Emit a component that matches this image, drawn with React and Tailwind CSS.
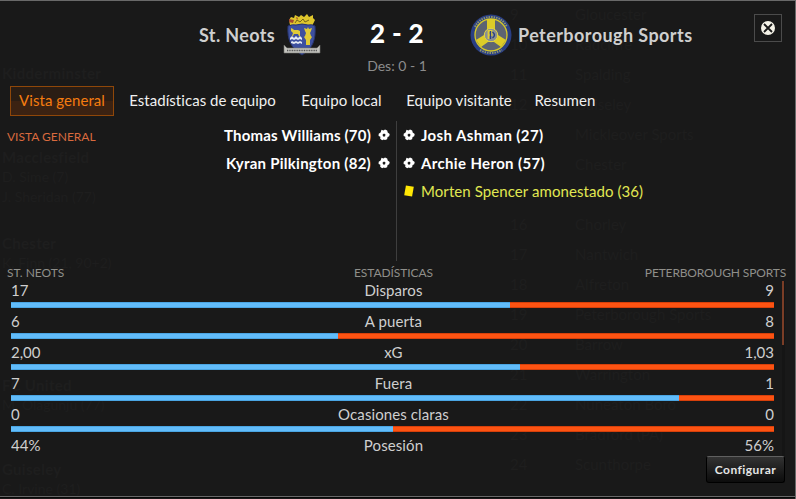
const tabs = [
  { label: 'Vista general', className: 'w-[104px] border border-[#8f4709] bg-linear-to-b from-[#2a1d14] from-50% to-[#3b2212] to-50% text-[#f57c10] tracking-[0.05px]' },
  { label: 'Estadísticas de equipo', className: 'ml-[14px] w-[149px] text-[#f0f0f0] tracking-[0.05px]' },
  { label: 'Equipo local', className: 'ml-[23px] w-[83px] text-[#f0f0f0] tracking-[0.05px]' },
  { label: 'Equipo visitante', className: 'ml-[22px] w-[108px] text-[#f0f0f0] tracking-[0.05px]' },
  { label: 'Resumen', className: 'ml-[19px] w-[66px] text-[#f0f0f0] tracking-[0.12px]' },
];

const stats = [
  { label: 'Disparos', home: '17', away: '9', split: 499 },
  { label: 'A puerta', home: '6', away: '8', split: 327 },
  { label: 'xG', home: '2,00', away: '1,03', split: 509 },
  { label: 'Fuera', home: '7', away: '1', split: 668 },
  { label: 'Ocasiones claras', home: '0', away: '0', split: 382 },
  { label: 'Posesión', home: '44%', away: '56%' },
];

// league table and results list showing faintly through the dialog
const league = [
  ['9', 'Gloucester'], ['10', 'Radcliffe'], ['11', 'Spalding'], ['12', 'Guiseley'],
  ['', 'Mickleover Sports'], ['', 'Chester'], ['', ''], ['16', 'Chorley'],
  ['17', 'Nantwich'], ['18', 'Alfreton'], ['19', 'Peterborough Sports'], ['20', 'Barrow'],
  ['21', 'Warrington'], ['22', 'Nuneaton Boro'], ['23', 'Bradford (PA)'], ['24', 'Scunthorpe'],
];

const results = [
  { team: 'Kidderminster', height: 'h-[84px]', scorers: [] },
  { team: 'Macclesfield', height: 'h-[86px]', scorers: ['D. Sime (7)', 'J. Sheridan (77)'] },
  { team: 'Chester', height: 'h-[142px]', scorers: ['K. Finn (21, 90+2)'] },
  { team: 'FC United', height: 'h-[84px]', scorers: ['M. Olagunju (77)'] },
  { team: 'Guiseley', height: 'h-[50px]', scorers: ['C. Irvine (31)'] },
];

function Backdrop() {
  return (
    <div aria-hidden="true" className="pointer-events-none absolute inset-0 -z-10 flex justify-between overflow-hidden text-[#1e1e1e]">
      <div className="w-[200px] pt-[62px] pl-[2px]">
        {results.map((r) => (
          <div key={r.team} className={r.height}>
            <div className="text-[15px] leading-[20px] font-bold tracking-[0.3px]">{r.team}</div>
            {r.scorers.map((s) => <div key={s} className="text-[14px] leading-[20px]">{s}</div>)}
          </div>
        ))}
      </div>
      <div className="-mt-[2px] w-[285px]">
        {league.map(([pos, team], i) => (
          <div key={i} className="flex h-[30px] items-center text-[15px]">
            <span className="w-[65px]">{pos}</span>
            <span>{team}</span>
          </div>
        ))}
      </div>
    </div>
  );
}

function HomeCrest() {
  return (
    <svg viewBox="0 0 38 42" className="h-[42px] w-[38px] shrink-0">
      <path d="M7 11L6 6l2-3 3 1 1-3 4 2 2-2 3 2 3-3 2 3 4-2v3l2 2-3 6z" fill="#dfc62c" />
      <path d="M6 5l5 1-1 3-4-1zM13 3l2 1-1 2z" fill="#a54b2b" />
      <path d="M12 9l2-3 3 2 3-3 2 3 4-2" stroke="#75651a" fill="none" />
      <path d="M5 12q5-2 8-1 6-2 12 0 4-1 7 1c1 14-2 22-13 29C8 34 4 26 5 12z" fill="#3d509f" stroke="#27346d" />
      <path d="M8 14l2 1 1 1h4l2 1v5h-1l-1-2h-4l-1 2H9l1-3-2-2z" fill="#dfca36" />
      <path d="M25 13l1 2 3-1-1 3-1 2 1 3 1 1-2 3v5h-4v-5l-2-3 1-1 1-3-1-2-1-3 3 1z" fill="#dfca36" />
      <path d="M7 24l2-2 2 2 2-2 2 2 2-2 2 2v2l-2-1-2 1-2-1-2 1-2-1-2 1zM8 28l1-1 2 1 2-1 2 1 2-1 2 1v2l-2-1-2 1-2-1-2 1-3-1z" fill="#e4e9f2" />
      <path d="M1 31l3 3h30l3-3v8H1z" fill="#c3c3be" stroke="#74746f" strokeWidth=".6" />
      <path d="M4 36.5h30" stroke="#505050" strokeWidth="1.7" strokeDasharray="1 .7" />
    </svg>
  );
}

function AwayCrest() {
  return (
    <svg viewBox="0 0 42 42" className="size-[42px] shrink-0">
      <circle cx="21" cy="21" r="20.5" fill="#293e84" />
      <path d="M5 13Q10 3 21 3t16 10" fill="none" stroke="#8d956f" strokeWidth="2" strokeDasharray="1.5 1" />
      <path d="M10 36q11 6 22 0" fill="none" stroke="#8d956f" strokeWidth="2" strokeDasharray="1.5 1" />
      <circle cx="21" cy="21" r="16" fill="#5d6472" stroke="#d7c928" strokeWidth="1.3" />
      <path d="M17 5h8v11l3 5 8 5-5 7-7-5h-6l-7 5-5-7 8-5 3-5z" fill="#ddcc28" />
      <circle cx="21" cy="21" r="6.7" fill="#8b9090" stroke="#e4d642" strokeWidth="1" />
      <path d="M18.500 25v-8h3v4h-3" fill="none" stroke="#dfcd38" strokeWidth="1.800" />
      <path d="M20.500 17v8m2-7q4 3 0 6" fill="none" stroke="#273d86" strokeWidth="1.400" />
    </svg>
  );
}

function BallIcon() {
  return (
    <svg viewBox="0 0 12 12" className="size-3 shrink-0">
      <path d="M3.500.7l2 .7L7 .6l2.200.8.5 2 2 1.500-.5 2.400-1.600.8-.5 2.200-2.100.8-1.300-.7-1.600.9-1.900-1.500.2-2L.6 7l.1-2.300 1.900-1.100z" fill="#fff" />
      <path d="M6 4.500l1.500 1.100L7 7.400H5.100l-.6-1.700z" fill="#191919" />
    </svg>
  );
}

function StatRow({ stat }) {
  return (
    <div className="h-[31px] w-[763px]">
      <div className="grid h-[21px] grid-cols-3 text-[15px] leading-[19px] text-[#cfcfcf]">
        <span>{stat.home}</span>
        <span className="pl-[2px] text-center tracking-[0.1px]">{stat.label}</span>
        <span className="text-right">{stat.away}</span>
      </div>
      {stat.split && (
        <div className="flex h-[6px] w-full">
          <div className="border-y border-[#4aa5e2] bg-[#61bcfa]" style={{ width: stat.split }} />
          <div className="grow border-y border-[#d6400b] bg-[#fd5312]" />
        </div>
      )}
    </div>
  );
}

export default function App() {
  return (
    <div className="relative isolate flex h-[499px] w-[796px] flex-col overflow-hidden border-t border-r border-[#696969] bg-[#191919] font-['Lato',sans-serif]">
      <Backdrop />
      <header className="flex h-[85px] shrink-0">
        <div className="flex w-[321px] items-start justify-end pt-[13px]">
          <span className="mr-[8px] pt-[8px] text-[18px] leading-[26px] font-bold tracking-[0.35px] text-[#cfcfcf]">St. Neots</span>
          <HomeCrest />
        </div>
        <div className="flex w-[152px] flex-col items-center pt-[14px]">
          <span className="text-[26px] leading-[36px] font-black tracking-[0.4px] text-white">2 - 2</span>
          <span className="mt-[5px] text-[14px] leading-[20px] text-[#8c8c8c]">Des: 0 - 1</span>
        </div>
        <div className="-ml-[3px] flex grow items-start pt-[13px]">
          <AwayCrest />
          <span className="ml-[6px] pt-[8px] text-[18px] leading-[26px] font-bold tracking-[0.43px] text-[#cfcfcf]">Peterborough Sports</span>
          <button aria-label="Cerrar" className="mr-[13px] ml-auto flex size-7 items-center justify-center border border-[#4b4b4b]">
            <svg viewBox="0 0 14 14" className="size-[14px]">
              <circle cx="7" cy="7" r="7" fill="#f5f3e8" />
              <path d="M3 3l8 8m0-8l-8 8" stroke="#191919" strokeWidth="1.8" />
            </svg>
          </button>
        </div>
      </header>

      <nav className="flex h-[30px] shrink-0 pl-[10px] text-[15px]">
        {tabs.map((tab) => (
          <button key={tab.label} className={`flex items-center justify-center pb-[1px] whitespace-nowrap ${tab.className}`}>
            {tab.label}
          </button>
        ))}
      </nav>

      <section className="flex h-[145px] shrink-0 pt-[5px] text-[15px] leading-[28px]">
        <div className="flex w-[396px] justify-between pr-[6px] pl-[7px]">
          <h2 className="pt-[6px] text-[12px] leading-[20px] text-[#d96a3e]">VISTA GENERAL</h2>
          <ul className="font-bold text-white">
            <li className="flex items-center justify-end gap-[7px] tracking-[0.2px]">Thomas Williams (70)<BallIcon /></li>
            <li className="flex items-center justify-end gap-[7px] tracking-[0.26px]">Kyran Pilkington (82)<BallIcon /></li>
          </ul>
        </div>
        <ul className="grow border-l border-[#3e3e3e] pl-[6px] font-bold text-white">
          <li className="flex items-center gap-[6px] tracking-[0.38px]"><BallIcon />Josh Ashman (27)</li>
          <li className="flex items-center gap-[6px] tracking-[0.35px]"><BallIcon />Archie Heron (57)</li>
          <li className="flex items-center gap-[6px] font-normal tracking-[0.08px] text-[#e1e852]">
            <span className="flex w-3 justify-center"><span className="h-[10px] w-[8px] rotate-10 bg-[#ffe705]" /></span>
            Morten Spencer amonestado (36)
          </li>
        </ul>
      </section>

      <section className="h-[194px] shrink-0 pt-[3px]">
        <div className="flex h-[17px] justify-between pr-[9px] pl-[7px] text-[12px] leading-[17px] text-[#8f8f8a]">
          <span className="w-[260px]">ST. NEOTS</span>
          <span className="w-[253px] text-center tracking-[-0.08px]">ESTADÍSTICAS</span>
          <span className="w-[266px] text-right tracking-[-0.15px]">PETERBOROUGH SPORTS</span>
        </div>
        <div className="flex justify-between pr-[10px] pl-[11px]">
          <div className="h-[175px] overflow-hidden">
            {stats.map((stat) => <StatRow key={stat.label} stat={stat} />)}
          </div>
          <div className="w-[3px] bg-[#151515]"><div className="h-[64px] w-[2px] bg-[#7a3d26]" /></div>
        </div>
      </section>

      <footer className="flex h-[42px] shrink-0 justify-end border-b border-[#696969] pr-[10px]">
        <button className="mt-px h-[27px] w-[79px] rounded-[3px] border border-black border-t-[#606060] bg-linear-to-b from-[#333] to-[#0c0c0c] text-[12px] font-bold tracking-[0.45px] text-[#e5e5e5]">Configurar</button>
      </footer>
      <div className="h-px bg-[#080808]" />
    </div>
  );
}
